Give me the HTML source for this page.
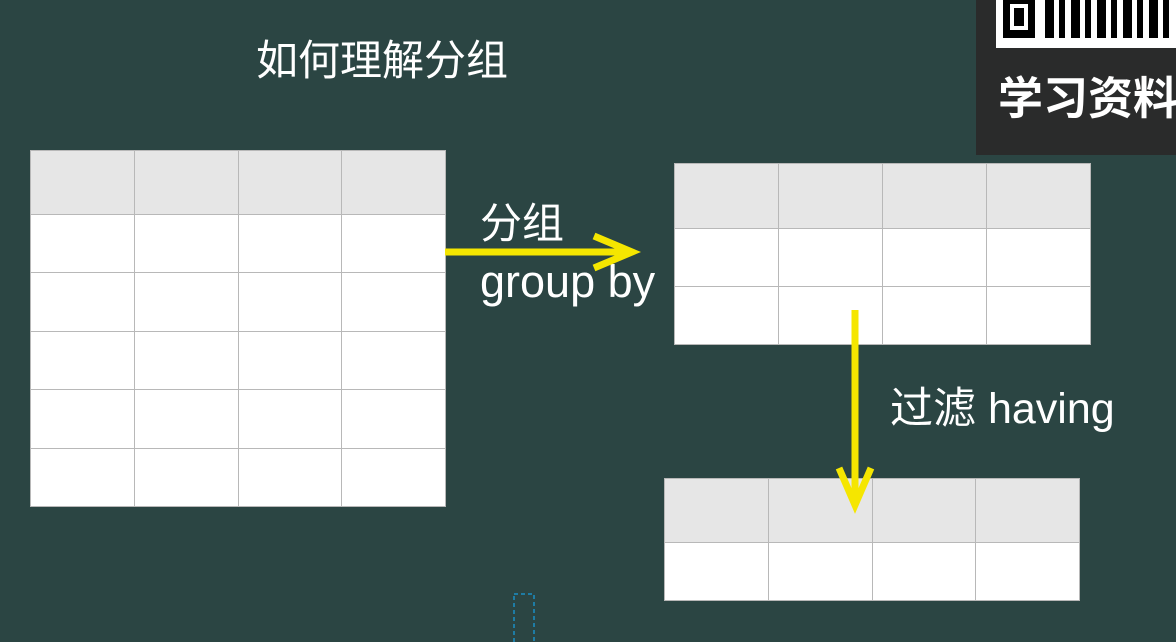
<!DOCTYPE html>
<html><head><meta charset="utf-8"><style>
body{margin:0;width:1176px;height:642px;overflow:hidden;background:#2b4543;position:relative;font-family:"Liberation Sans","Noto Sans CJK SC",sans-serif;color:#fff}
.t{position:absolute;border-collapse:collapse}
.t td{border:1px solid #b8b8b8;background:#fff;padding:0}
.t tr:first-child td{background:#e6e6e6}
.tx{position:absolute;white-space:nowrap;line-height:1}
</style></head><body>
<div style="position:absolute;left:976px;top:0;width:200px;height:155px;background:#2a2b2b"></div>
<div style="position:absolute;left:996px;top:0;width:180px;height:48px;background:#fff"></div>
<div style="position:absolute;left:1003px;top:0;width:32px;height:38px;background:#000"></div>
<div style="position:absolute;left:1010px;top:4px;width:18px;height:26px;background:#fff"></div>
<div style="position:absolute;left:1014px;top:8px;width:10px;height:18px;background:#000"></div>
<div style="position:absolute;left:1045px;top:0;width:130px;height:38px;background:repeating-linear-gradient(90deg,#000 0 9px,#fff 9px 14px,#000 14px 20px,#fff 20px 26px)"></div>
<div class="tx" style="left:998px;top:76px;font-size:45px;font-weight:bold">学习资料</div>
<div class="tx" style="left:256px;top:40px;font-size:42px">如何理解分组</div>
<table class="t" style="left:30px;top:150px;width:416px;height:357px">
<tr style="height:64px"><td></td><td></td><td></td><td></td></tr>
<tr><td></td><td></td><td></td><td></td></tr><tr><td></td><td></td><td></td><td></td></tr>
<tr><td></td><td></td><td></td><td></td></tr><tr><td></td><td></td><td></td><td></td></tr>
<tr><td></td><td></td><td></td><td></td></tr></table>
<table class="t" style="left:674px;top:163px;width:417px;height:182px">
<tr style="height:65px"><td></td><td></td><td></td><td></td></tr>
<tr><td></td><td></td><td></td><td></td></tr><tr><td></td><td></td><td></td><td></td></tr></table>
<table class="t" style="left:664px;top:478px;width:416px;height:123px">
<tr style="height:64px"><td></td><td></td><td></td><td></td></tr>
<tr><td></td><td></td><td></td><td></td></tr></table>
<div class="tx" style="left:480px;top:203px;font-size:42px">分组</div>
<div class="tx" style="left:480px;top:259px;font-size:45px">group by</div>
<div class="tx" style="left:890px;top:388px;font-size:43px">过滤 having</div>
<svg style="position:absolute;left:0;top:0" width="1176" height="642">
<g stroke="#f5e600" stroke-width="7" fill="none" stroke-linecap="butt">
<path d="M445 252H630M594 236L632 252L594 268"/>
<path d="M855 310V504M839 468L855 505L871 468"/>
</g>
<rect x="514" y="594" width="20" height="60" fill="none" stroke="#1a8fc4" stroke-width="1.5" stroke-dasharray="4 3"/>
</svg>
</body></html>
